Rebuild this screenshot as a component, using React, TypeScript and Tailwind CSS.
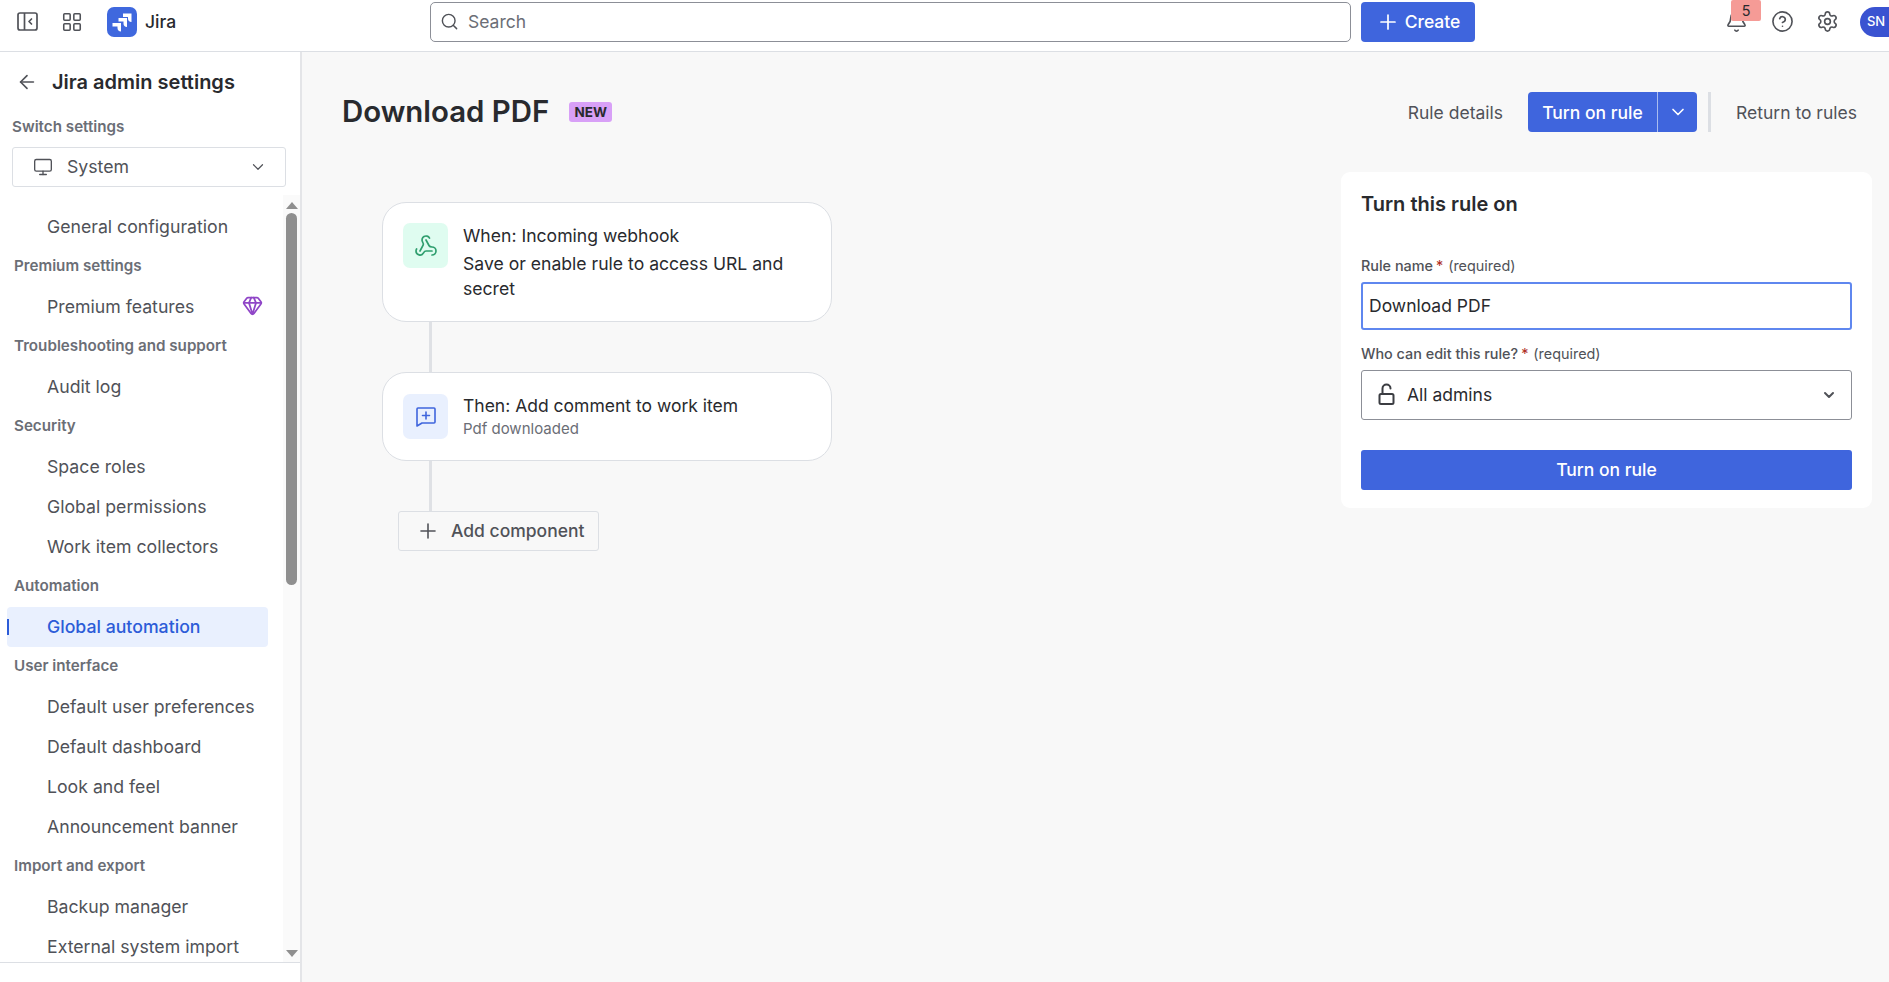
import React from "react";
import { ArrowLeft, Bell, ChevronDown, CircleHelp, Gem, LayoutGrid, Monitor, Plus, Search, Settings, Webhook } from "lucide-react";

type Row = { t: string; section?: boolean; active?: boolean; gem?: boolean };

const rows: Row[] = [
  { t: "General configuration" },
  { t: "Premium settings", section: true },
  { t: "Premium features", gem: true },
  { t: "Troubleshooting and support", section: true },
  { t: "Audit log" },
  { t: "Security", section: true },
  { t: "Space roles" },
  { t: "Global permissions" },
  { t: "Work item collectors" },
  { t: "Automation", section: true },
  { t: "Global automation", active: true },
  { t: "User interface", section: true },
  { t: "Default user preferences" },
  { t: "Default dashboard" },
  { t: "Look and feel" },
  { t: "Announcement banner" },
  { t: "Import and export", section: true },
  { t: "Backup manager" },
  { t: "External system import" },
];

function Topbar() {
  return (
    <header className="h-[52px] shrink-0 flex items-center pb-[8px] bg-white border-b border-[#dcdfe4] relative">
      <div className="w-[430px] shrink-0 flex items-center pl-[17px]">
        <svg width="21" height="21" viewBox="0 0 21 21" fill="none" stroke="#505258" strokeWidth="1.7">
          <rect x="1" y="2" width="19" height="17" rx="2" />
          <path d="M7.500 2v17" />
          <path d="M14.500 8l-2.500 2.500 2.500 2.500" strokeLinecap="round" strokeLinejoin="round" />
        </svg>
        <LayoutGrid size={22} strokeWidth={1.7} className="ml-[23px] text-[#505258]" />
        <svg width="30" height="30" viewBox="0 0 30 30" className="ml-[24px]">
          <rect width="30" height="30" rx="7" fill="#3f68de" />
          <path d="M16 6.500h8.500v8.500c-2.200 0-3.500-1.400-3.500-3.500V10h-5z M11.500 11h8.500v9c-2.200 0-3.500-1.400-3.500-3.500V14.500h-5z M5.500 16h8.500v8.500c-2.200 0-3.500-1.400-3.500-3.500v-1.500h-5z" fill="#fff" />
        </svg>
        <span className="ml-[8px] text-[17.500px] leading-[32px] font-medium text-[#292a2e]">Jira</span>
      </div>
      <div className="w-[921px] h-[40px] shrink-0 flex items-center border border-[#8c8f97] rounded-[5px] pl-[9px] bg-white">
        <Search size={19} strokeWidth={1.8} className="text-[#505258]" />
        <span className="ml-[9px] mt-[1px] text-[17.500px] text-[#6b6e76]">Search</span>
      </div>
      <button className="ml-[10px] w-[114px] h-[40px] flex items-center justify-center gap-[5px] rounded-[4px] bg-[#3f65dd] text-white text-[17.500px] font-medium">
        <Plus size={24} strokeWidth={1.7} />
        <span className="mt-[1px]">Create</span>
      </button>
      <div className="flex-1" />
      <div className="flex items-center">
        <div className="relative w-[24px] flex justify-center mr-[21px] -ml-[3px]">
          <Bell size={23} strokeWidth={1.7} className="text-[#505258] -translate-x-[2px]" />
          <span className="absolute left-[5px] top-[-10px] w-[30px] h-[21px] bg-[#f59b96] rounded-[2px] text-center text-[14.400px] leading-[21px] text-[#292a2e]">5</span>
        </div>
        <CircleHelp size={23} strokeWidth={1.7} className="text-[#505258] mr-[22px]" />
        <Settings size={23} strokeWidth={1.7} className="text-[#505258] mr-[21px]" />
        <div className="w-[29px] h-[30px] rounded-l-full bg-[#3a53d1] text-white text-[13px] font-medium flex items-center justify-center pl-[3px]">SN</div>
      </div>
    </header>
  );
}

function Sidebar() {
  return (
    <aside className="w-[302px] shrink-0 h-full flex flex-col bg-white border-r-2 border-[#e4e5e8]">
      <div className="h-[143px] shrink-0">
        <div className="flex items-center h-[40px] mt-[10px] pl-[16px]">
          <ArrowLeft size={22} strokeWidth={1.8} className="text-[#505258]" />
          <span className="ml-[14px] text-[20px] font-semibold text-[#292a2e]">Jira admin settings</span>
        </div>
        <div className="pl-[12px] mt-[15px] text-[15.200px] leading-[20px] font-semibold text-[#6b6e76]">Switch settings</div>
        <div className="ml-[12px] mt-[10px] w-[274px] h-[40px] flex items-center border border-[#dcdfe4] rounded-[3px] pl-[20px] pr-[18px]">
          <Monitor size={20} strokeWidth={1.6} className="text-[#505258]" />
          <span className="ml-[14px] text-[17.700px] text-[#505258]">System</span>
          <ChevronDown size={18} strokeWidth={1.6} className="ml-auto text-[#505258]" />
        </div>
      </div>
      <div className="h-[768px] shrink-0 flex border-b border-[#dcdfe4]">
        <div className="flex-1 overflow-hidden pt-[12px]">
          {rows.map((r) =>
            r.section ? (
              <div key={r.t} className="h-[40px] flex items-center pb-[1px] pl-[14px] text-[15.200px] font-semibold text-[#6b6e76]">{r.t}</div>
            ) : (
              <div
                key={r.t}
                className={
                  r.active
                    ? "relative ml-[7px] mr-[15px] h-[40px] flex items-center pl-[40px] pt-[1px] rounded-[4px] bg-[#e9f0fe] text-[17.700px] font-medium text-[#2c5cd8]"
                    : "relative ml-[7px] mr-[15px] h-[40px] flex items-center pl-[40px] pt-[1px] text-[17.700px] text-[#505258]"
                }
              >
                {r.active && <span className="absolute left-0 top-[12px] w-[2px] h-[16px] bg-[#2c5cd8]" />}
                {r.t}
                {r.gem && <Gem size={21} strokeWidth={2} className="absolute right-[5px] top-[8px] text-[#8f45c7]" />}
              </div>
            )
          )}
        </div>
        <div className="w-[17px] shrink-0 bg-[#fafafa] flex flex-col items-center">
          <div className="mt-[7px] w-0 h-0 border-l-[6px] border-r-[6px] border-b-[7px] border-l-transparent border-r-transparent border-b-[#8f8f8f]" />
          <div className="mt-[4px] w-[11px] h-[372px] rounded-full bg-[#8f8f8f]" />
          <div className="flex-1" />
          <div className="mb-[5px] w-0 h-0 border-l-[6px] border-r-[6px] border-t-[7px] border-l-transparent border-r-transparent border-t-[#8f8f8f]" />
        </div>
      </div>
    </aside>
  );
}

function Flow() {
  return (
    <div className="pl-[80px] pt-[70px] w-[530px] flex flex-col">
      <div className="w-[450px] h-[120px] bg-white border border-[#dcdfe4] rounded-[24px] flex pl-[20px] pt-[20px]">
        <div className="w-[45px] h-[45px] rounded-[7px] bg-[#dffcf0] flex items-center justify-center shrink-0">
          <Webhook size={24} strokeWidth={1.7} className="text-[#2f9e6e]" />
        </div>
        <div className="ml-[15px] w-[345px] text-[17.600px] text-[#292a2e]">
          <div className="leading-[25px]">When: Incoming webhook</div>
          <div className="leading-[25px] mt-[3px]">Save or enable rule to access URL and secret</div>
        </div>
      </div>
      <div className="ml-[47px] w-[3px] h-[50px] bg-[#dfe1e5]" />
      <div className="w-[450px] h-[89px] bg-white border border-[#dcdfe4] rounded-[24px] flex items-center pl-[20px]">
        <div className="w-[45px] h-[45px] rounded-[7px] bg-[#e9f0fe] flex items-center justify-center shrink-0">
          <svg width="22" height="22" viewBox="0 0 22 22" fill="none" stroke="#3f65dd" strokeWidth="1.6" strokeLinejoin="round" strokeLinecap="round">
            <path d="M3 2h16a1 1 0 0 1 1 1v13a1 1 0 0 1-1 1H7l-5 3V3a1 1 0 0 1 1-1z" />
            <path d="M11 6v7M7.500 9.500h7" />
          </svg>
        </div>
        <div className="ml-[15px]">
          <div className="text-[17.500px] leading-[25px] -mt-[1px] text-[#292a2e]">Then: Add comment to work item</div>
          <div className="text-[15px] leading-[20px] mt-[1px] text-[#6b6e76]">Pdf downloaded</div>
        </div>
      </div>
      <div className="ml-[47px] w-[3px] h-[50px] bg-[#dfe1e5]" />
      <button className="ml-[16px] w-[201px] h-[40px] flex items-center border border-[#dcdfe4] rounded-[3px] pl-[17px] text-[17.500px] font-medium text-[#505258]">
        <Plus size={24} strokeWidth={1.6} />
        <span className="ml-[11px] mt-[1px]">Add component</span>
      </button>
    </div>
  );
}

function Label({ text }: { text: string }) {
  return (
    <div className="text-[14.400px] leading-[20px] text-[#505258]">
      <span className="font-medium">{text}</span>
      <span className="text-[#ae2e24] ml-[3px]">*</span>
      <span className="ml-[5px]">(required)</span>
    </div>
  );
}

function Panel() {
  return (
    <div className="w-[531px] h-[336px] mt-[40px] mr-[17px] bg-white rounded-[9px] px-[20px] pt-[20px] flex flex-col">
      <div className="text-[20px] leading-[24px] font-semibold text-[#292a2e]">Turn this rule on</div>
      <div className="mt-[40px]"><Label text="Rule name" /></div>
      <div className="mt-[6px] h-[48px] border-2 border-[#5f87ef] rounded-[3px] flex items-center pl-[6px] text-[17.500px] text-[#292a2e]">Download PDF</div>
      <div className="mt-[14px]"><Label text="Who can edit this rule?" /></div>
      <div className="mt-[6px] h-[50px] border border-[#8c8f97] rounded-[3px] flex items-center pl-[14px] pr-[14px]">
        <svg width="22" height="24" viewBox="0 0 22 24" fill="none" stroke="#3b3d42" strokeWidth="2" strokeLinecap="round" strokeLinejoin="round">
          <rect x="3.500" y="11" width="14" height="10" rx="1.500" />
          <path d="M6.500 11V5.500a4 4 0 0 1 8 0" />
        </svg>
        <span className="ml-[9px] text-[17.500px] text-[#292a2e]">All admins</span>
        <ChevronDown size={16} strokeWidth={3} className="ml-auto text-[#505258]" />
      </div>
      <button className="mt-[30px] h-[40px] rounded-[3px] bg-[#3f65dd] text-white text-[17.500px] font-medium">Turn on rule</button>
    </div>
  );
}

function Main() {
  return (
    <main className="flex-1 h-full flex flex-col bg-[#f8f8f8]">
      <div className="h-[40px] mt-[40px] shrink-0 flex items-center pl-[40px] pr-[32px]">
        <h1 className="text-[29.400px] font-semibold mt-[1px] text-[#292a2e]">Download PDF</h1>
        <span className="ml-[20px] w-[43px] h-[20px] rounded-[3px] bg-[#d8a0f7] text-[13.500px] leading-[20px] font-bold text-center text-[#292a2e]">NEW</span>
        <span className="ml-auto mt-[2px] text-[17.500px] text-[#505258]">Rule details</span>
        <div className="ml-[25px] h-[40px] flex rounded-[4px] overflow-hidden bg-[#3f65dd] text-white">
          <span className="w-[129px] flex items-center justify-center pt-[2px] text-[17.500px] font-medium">Turn on rule</span>
          <span className="w-[40px] border-l border-[#a9bcf0] flex items-center justify-center"><ChevronDown size={20} strokeWidth={2} /></span>
        </div>
        <div className="ml-[11px] w-[3px] h-[40px] bg-[#dcdfe4]" />
        <span className="ml-[25px] mt-[2px] text-[17.500px] text-[#505258]">Return to rules</span>
      </div>
      <div className="flex justify-between">
        <Flow />
        <Panel />
      </div>
    </main>
  );
}

export default function App() {
  return (
    <div className="h-[982px] w-[1889px] overflow-hidden flex flex-col bg-white font-['Inter',sans-serif]">
      <Topbar />
      <div className="flex flex-1 min-h-0">
        <Sidebar />
        <Main />
      </div>
    </div>
  );
}
